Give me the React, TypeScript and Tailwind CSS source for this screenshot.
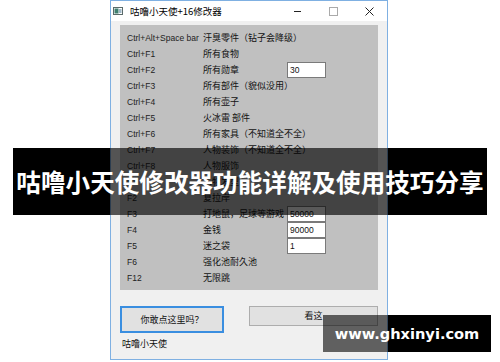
import React from 'react';

interface Row {
    key: string;
    label: string;
    value?: string;
}

const rows: Row[] = [
    { key: 'Ctrl+Alt+Space bar', label: '汗臭零件（钻子会降级）' },
    { key: 'Ctrl+F1', label: '所有食物' },
    { key: 'Ctrl+F2', label: '所有勋章', value: '30' },
    { key: 'Ctrl+F3', label: '所有部件（貌似没用）' },
    { key: 'Ctrl+F4', label: '所有壶子' },
    { key: 'Ctrl+F5', label: '火冰雷 部件' },
    { key: 'Ctrl+F6', label: '所有家具（不知道全不全）' },
    { key: 'Ctrl+F7', label: '人物装饰（不知道全不全）' },
    { key: 'Ctrl+F8', label: '人物服饰' },
    { key: 'F1', label: '人物发型' },
    { key: 'F2', label: '复拉岸' },
    { key: 'F3', label: '打地鼠，足球等游戏', value: '50000' },
    { key: 'F4', label: '金钱', value: '90000' },
    { key: 'F5', label: '迷之袋', value: '1' },
    { key: 'F6', label: '强化池耐久池' },
    { key: 'F12', label: '无限跳' },
];

const cjk = "font-['Noto_Sans_CJK_SC',sans-serif]";

const App = () => {
    return (
        <div className={`relative w-[500px] h-[362px] bg-white overflow-hidden ${cjk}`}>
            {/* Dialog window */}
            <div className="ml-[110px] w-[278px] h-[360px] border border-[#7fb0e2] bg-[#f0f0f0] flex flex-col">
                {/* Title bar */}
                <div className="h-[20px] bg-white flex items-center text-[9.5px] text-black">
                    <svg width="10" height="8" viewBox="0 0 10 8" className="ml-[2px]">
                        <rect x="0.5" y="0.5" width="9" height="7" fill="#fff" stroke="#5a6a6a" />
                        <rect x="1.5" y="1.5" width="4" height="5" fill="#3f7f6f" />
                        <rect x="6" y="2" width="2.5" height="4" fill="#9fb8c8" />
                    </svg>
                    <span className="ml-[7px]">咕噜小天使+16修改器</span>
                    <div className="ml-auto flex items-center">
                        <svg width="8" height="8" viewBox="0 0 8 8" className="mr-[27px]">
                            <line x1="0" y1="4.5" x2="7" y2="4.5" stroke="#222" strokeWidth="1" />
                        </svg>
                        <svg width="9" height="9" viewBox="0 0 9 9" className="mr-[27px]">
                            <rect x="0.5" y="0.5" width="8" height="8" fill="none" stroke="#aaa" />
                        </svg>
                        <svg width="9" height="9" viewBox="0 0 9 9" className="mr-[13px]">
                            <path d="M0.5 0.5 L8.5 8.5 M8.5 0.5 L0.5 8.5" stroke="#222" strokeWidth="1" />
                        </svg>
                    </div>
                </div>

                <div className="px-[9px] pt-[4px] flex-1 flex flex-col">
                    {/* Hotkey list */}
                    <div className="h-[265px] bg-[#c0c0c0] pt-[5px] pl-[7px]">
                        {rows.map((row) => (
                            <div key={row.key} className="h-[16px] flex items-center">
                                <span className="w-[76px] text-[8.5px] text-[#222] font-['Liberation_Sans',sans-serif] whitespace-nowrap">
                                    {row.key}
                                </span>
                                <span className="w-[84px] text-[9px] text-[#111] whitespace-nowrap overflow-visible">
                                    {row.label}
                                </span>
                                {row.value && (
                                    <div className="relative w-[39px] h-[16px] border border-[#7a7a7a] bg-white flex items-center px-[2px] text-[8.5px] text-[#111] font-['Liberation_Sans',sans-serif]">
                                        {row.value}
                                    </div>
                                )}
                            </div>
                        ))}
                    </div>

                    {/* Buttons */}
                    <div className="mt-[16px] flex items-start">
                        <button className="w-[104px] h-[27px] border-2 border-[#3a8ee0] bg-[#e1e1e1] text-[9px] text-[#111]">
                            你敢点这里吗？
                        </button>
                        <button className="ml-[25px] w-[129px] h-[20px] border border-[#adadad] bg-[#e1e1e1] text-[9px] text-[#111]">
                            看这
                        </button>
                    </div>
                    <div className="mt-[4px] ml-[2px] text-[9px] text-[#111]">咕噜小天使</div>
                </div>
            </div>

            {/* Title banner */}
            <div className="absolute left-[13px] top-[148px] w-[474px] h-[67px] flex">
                <div className="w-[97px] bg-black" />
                <div className="w-[278px] bg-black/65" />
                <div className="flex-1 bg-black" />
            </div>
            <div className="absolute left-[13px] top-[148px] w-[474px] h-[67px] flex items-center justify-center text-white text-[24.6px] font-bold leading-none whitespace-nowrap">
                咕噜小天使修改器功能详解及使用技巧分享
            </div>

            {/* Watermark */}
            <div className="absolute left-[323px] top-[315px] w-[168px] h-[37px] flex">
                <div className="w-[65px] bg-black/60" />
                <div className="flex-1 bg-black" />
            </div>
            <div className="absolute left-[323px] top-[315px] w-[168px] h-[37px] flex items-center justify-center text-white text-[14.6px] font-bold font-['DejaVu_Sans',sans-serif]">
                www.ghxinyi.com
            </div>
        </div>
    );
};

export default App;
